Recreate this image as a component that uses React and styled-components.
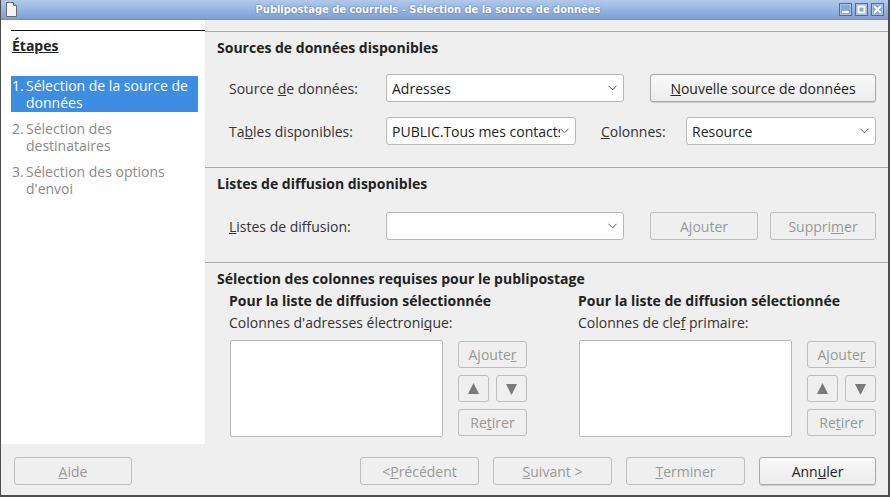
import React from 'react';
import styled, { createGlobalStyle } from 'styled-components';

const GlobalStyle = createGlobalStyle`
  html, body {
    margin: 0;
    padding: 0;
    background: #efefef;
  }
  body {
    font-family: "Open Sans", "Noto Sans", sans-serif;
    font-size: 13px;
    color: #333;
  }
  * { box-sizing: border-box; }
`;

const Window = styled.div`
  width: 890px;
  height: 497px;
  display: flex;
  flex-direction: column;
  background: #efefef;
  border-left: 1px solid #4e4e4e;
  border-right: 2px solid #4e4e4e;
  border-bottom: 2px solid #4e4e4e;
  overflow: hidden;
`;

const TitleBar = styled.div`
  height: 20px;
  flex: none;
  display: flex;
  align-items: center;
  padding: 0 4px 0 5px;
  background: linear-gradient(#b2c9ec, #7d9fd6);
  border-bottom: 1px solid #6f8fc2;
`;

const Title = styled.div`
  flex: 1;
  text-align: center;
  color: #fff;
  font-family: "DejaVu Sans Condensed", "DejaVu Sans", sans-serif;
  font-weight: bold;
  font-size: 11px;
  text-shadow: 0 0 2px #4d6a9c;
`;

const WinButtons = styled.div`
  display: flex;
  gap: 3px;
`;

const WinButton = styled.div`
  width: 13px;
  height: 13px;
  border: 1px solid #4b6ca0;
  box-shadow: inset 0 0 0 1px #a9c1e6;
  background: #88a8da;
  display: flex;
  align-items: center;
  justify-content: center;
`;

const Body = styled.div`
  flex: 1;
  display: flex;
  min-height: 0;
`;

const Sidebar = styled.div`
  width: 204px;
  flex: none;
  background: #fff;
  padding: 10px 7px 0 10px;
`;

const SideHead = styled.div`
  border-top: 1px solid #111;
  padding-top: 5px;
  margin-right: -7px;
  font-weight: bold;
  font-size: 14px;
  color: #222;
  text-decoration: underline;
  line-height: 20px;
  padding-left: 1px;
`;

const Steps = styled.div`
  margin-top: 20px;
  display: flex;
  flex-direction: column;
  gap: 7px;
`;

const Step = styled.div`
  display: flex;
  font-size: 14px;
  line-height: 17px;
  padding: 1px 0 1px 1px;
  background: ${p => (p.$active ? '#3d8ee3' : 'transparent')};
  color: ${p => (p.$active ? '#fff' : '#8a8a8a')};
`;

const StepNum = styled.span`
  width: 14px;
  flex: none;
`;

const Main = styled.div`
  flex: 1;
  display: flex;
  flex-direction: column;
  padding-top: 11px;
`;

const Section = styled.div`
  border-top: 1px solid #a8a8a8;
  padding: 7px 13px 0 12px;
  height: ${p => p.$h}px;
  flex: none;
`;

const Heading = styled.div`
  font-weight: bold;
  font-size: 14px;
  line-height: 17px;
  color: #222;
`;

const Rows = styled.div`
  padding-left: 12px;
  margin-top: ${p => p.$top || 18}px;
  display: flex;
  flex-direction: column;
  gap: 15px;
`;

const Row = styled.div`
  display: flex;
  align-items: center;
  height: 28px;
`;

const Label = styled.div`
  width: ${p => p.$w || 157}px;
  flex: none;
  margin-left: ${p => p.$ml || 0}px;
  font-size: 14px;
  color: #333;
`;

const Combo = styled.div`
  width: ${p => p.$w}px;
  height: 28px;
  flex: none;
  background: #fff;
  border: 1px solid #b9b9b9;
  border-radius: 3px;
  display: flex;
  align-items: center;
  padding: 0 6px 0 5px;
  font-size: 14px;
  color: #222;
  white-space: nowrap;
  overflow: hidden;
`;

const ComboText = styled.span`
  flex: 1;
  min-width: 0;
  overflow: hidden;
`;

const Button = styled.div`
  width: ${p => p.$w}px;
  height: ${p => p.$hgt || 28}px;
  flex: none;
  margin-left: ${p => p.$ml || 0}px;
  border: 1px solid ${p => (p.$enabled ? '#a9a9a9' : '#bdbdbd')};
  border-radius: 3px;
  background: ${p => (p.$enabled ? 'linear-gradient(#f9f9f9, #ececec)' : '#efefef')};
  box-shadow: ${p => (p.$enabled ? '0 1px 1px rgba(0,0,0,0.15)' : 'none')};
  display: flex;
  align-items: center;
  justify-content: center;
  font-size: 14px;
  color: ${p => (p.$enabled ? '#222' : '#999')};
  white-space: nowrap;
`;

const Columns = styled.div`
  padding-left: 12px;
  display: grid;
  grid-template-columns: 298px 298px;
  column-gap: 51px;
  margin-top: 5px;
`;

const ColHead = styled.div`
  font-weight: bold;
  font-size: 14px;
  line-height: 17px;
  color: #222;
`;

const ColLabel = styled.div`
  font-size: 14px;
  line-height: 17px;
  margin-top: 5px;
  color: #333;
`;

const ListArea = styled.div`
  display: flex;
  gap: 15px;
  margin-top: 9px;
`;

const ListBox = styled.div`
  width: 214px;
  height: 97px;
  background: #fff;
  border: 1px solid #b9b9b9;
  border-radius: 2px;
  margin-left: 1px;
`;

const ListButtons = styled.div`
  width: 69px;
  display: flex;
  flex-direction: column;
  gap: 7px;
  padding-top: 1px;
`;

const ArrowRow = styled.div`
  display: flex;
  justify-content: space-between;
`;

const Arrow = styled.div`
  width: 31px;
  height: 27px;
  border: 1px solid #bdbdbd;
  border-radius: 3px;
  display: flex;
  align-items: center;
  justify-content: center;
`;

const Footer = styled.div`
  height: 51px;
  flex: none;
  display: flex;
  align-items: flex-start;
  padding: 13px 12px 0 13px;
  gap: 14px;
`;

const Spacer = styled.div`
  flex: 1;
`;

function Chevron() {
  return (
    <svg width="9" height="6" viewBox="0 0 9 6">
      <polyline points="0.5,0.8 4.5,4.8 8.5,0.8" fill="none" stroke="#555" strokeWidth="1" />
    </svg>
  );
}

function Triangle({ down }) {
  return (
    <svg width="11" height="12" viewBox="0 0 11 12">
      <polygon points={down ? '0,1 11,1 5.5,12' : '5.5,0 11,11 0,11'} fill="#7a7a7a" />
    </svg>
  );
}

function Select({ w, value }) {
  return (
    <Combo $w={w}>
      <ComboText>{value}</ComboText>
      <Chevron />
    </Combo>
  );
}

function ColumnPicker({ label }) {
  return (
    <div>
      <ColHead>Pour la liste de diffusion sélectionnée</ColHead>
      <ColLabel>{label}</ColLabel>
      <ListArea>
        <ListBox />
        <ListButtons>
          <Button $w={69} $hgt={27}>Ajoute<u>r</u></Button>
          <ArrowRow>
            <Arrow><Triangle /></Arrow>
            <Arrow><Triangle down /></Arrow>
          </ArrowRow>
          <Button $w={69} $hgt={27}>Re<u>t</u>irer</Button>
        </ListButtons>
      </ListArea>
    </div>
  );
}

export default function App() {
  return (
    <>
      <GlobalStyle />
      <Window>
        <TitleBar>
          <svg width="11" height="15" viewBox="0 0 11 15">
            <path d="M0.5 0.5 H7.5 L10.5 3.5 V14.5 H0.5 Z" fill="#f4f4f4" stroke="#6b6b6b" />
            <path d="M7.5 0.5 V3.5 H10.5" fill="#ccc" stroke="#6b6b6b" />
          </svg>
          <Title>Publipostage de courriels - Sélection de la source de données</Title>
          <WinButtons>
            <WinButton>
              <svg width="9" height="9"><rect x="1" y="6" width="7" height="2" fill="#fff" /></svg>
            </WinButton>
            <WinButton>
              <svg width="9" height="9"><rect x="1.5" y="1.5" width="6" height="6" fill="none" stroke="#fff" strokeWidth="2" /></svg>
            </WinButton>
            <WinButton>
              <svg width="9" height="9"><path d="M1 1 L8 8 M8 1 L1 8" stroke="#fff" strokeWidth="2" /></svg>
            </WinButton>
          </WinButtons>
        </TitleBar>
        <Body>
          <Sidebar>
            <SideHead>Étapes</SideHead>
            <Steps>
              <Step $active>
                <StepNum>1.</StepNum>
                <span>Sélection de la source de données</span>
              </Step>
              <Step>
                <StepNum>2.</StepNum>
                <span>Sélection des destinataires</span>
              </Step>
              <Step>
                <StepNum>3.</StepNum>
                <span>Sélection des options d'envoi</span>
              </Step>
            </Steps>
          </Sidebar>
          <Main>
            <Section $h={136}>
              <Heading>Sources de données disponibles</Heading>
              <Rows>
                <Row>
                  <Label>Source <u>d</u>e données:</Label>
                  <Select w={238} value="Adresses" />
                  <Button $w={226} $ml={26} $enabled><u>N</u>ouvelle source de données</Button>
                </Row>
                <Row>
                  <Label>Ta<u>b</u>les disponibles:</Label>
                  <Select w={190} value="PUBLIC.Tous mes contacts" />
                  <Label $w={85} $ml={25}><u>C</u>olonnes:</Label>
                  <Select w={190} value="Resource" />
                </Row>
              </Rows>
            </Section>
            <Section $h={95}>
              <Heading>Listes de diffusion disponibles</Heading>
              <Rows $top={20}>
                <Row>
                  <Label><u>L</u>istes de diffusion:</Label>
                  <Select w={238} value="" />
                  <Button $w={108} $ml={26}>A<u>j</u>outer</Button>
                  <Button $w={106} $ml={12}>Suppri<u>m</u>er</Button>
                </Row>
              </Rows>
            </Section>
            <Section $h={183}>
              <Heading>Sélection des colonnes requises pour le publipostage</Heading>
              <Columns>
                <ColumnPicker label={<>Colonnes d'adresses électroni<u>q</u>ue:</>} />
                <ColumnPicker label={<>Colonnes de cle<u>f</u> primaire:</>} />
              </Columns>
            </Section>
          </Main>
        </Body>
        <Footer>
          <Button $w={118}><u>A</u>ide</Button>
          <Spacer />
          <Button $w={119}>&lt; <u>P</u>récédent</Button>
          <Button $w={119}><u>S</u>uivant &gt;</Button>
          <Button $w={119}><u>T</u>erminer</Button>
          <Button $w={117} $enabled>Ann<u>u</u>ler</Button>
        </Footer>
      </Window>
    </>
  );
}
